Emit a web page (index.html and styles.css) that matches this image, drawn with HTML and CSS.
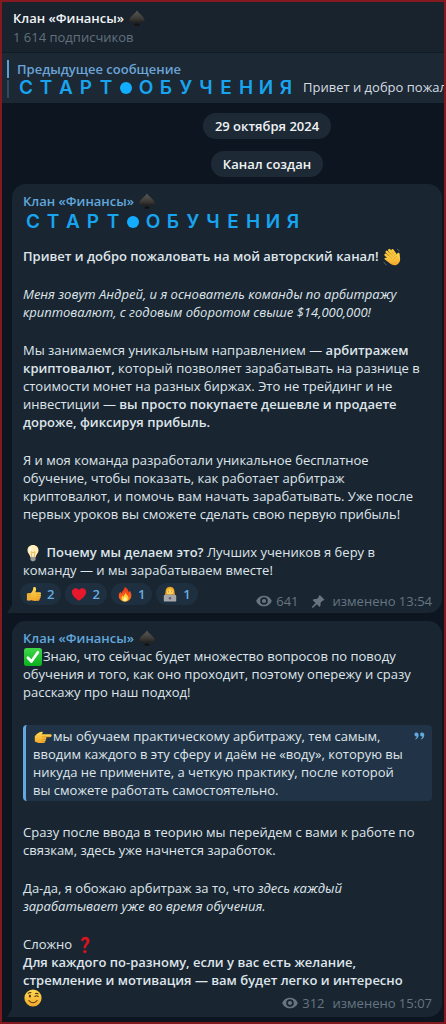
FILE: index.html
```html
<!DOCTYPE html>
<html lang="ru">
<head>
<meta charset="utf-8">
<meta name="viewport" content="width=device-width, initial-scale=1">
<title>Клан «Финансы»</title>
<link rel="stylesheet" href="styles.css">
</head>
<body>
<svg class="sprite" aria-hidden="true">
  <defs>
    <linearGradient id="g-spade" x1="0" y1="0" x2="0" y2="1"><stop offset="0" stop-color="#5c5a56"/><stop offset=".55" stop-color="#3a3835"/><stop offset="1" stop-color="#0c0b0a"/></linearGradient>
    <linearGradient id="g-skin" x1="0" y1="0" x2="0" y2="1"><stop offset="0" stop-color="#ffdc50"/><stop offset="1" stop-color="#f2a62c"/></linearGradient>
    <linearGradient id="g-check" x1="0" y1="0" x2="0" y2="1"><stop offset="0" stop-color="#3fd84c"/><stop offset="1" stop-color="#0bb01d"/></linearGradient>
    <linearGradient id="g-fire" x1="0" y1="0" x2="0" y2="1"><stop offset="0" stop-color="#e8311c"/><stop offset="1" stop-color="#fb7a1c"/></linearGradient>
    <symbol id="spade" viewBox="0 0 18 18"><path fill="url(#g-spade)" d="M9 .5C10.500 3.500 17.500 7.500 17.500 11.300c0 2.900-4.800 4-7.300 1.700.2 1.900.9 3 2 3.700v.8H5.800v-.8c1.100-.7 1.800-1.800 2-3.700-2.500 2.300-7.300 1.200-7.300-1.700C.5 7.500 7.500 3.500 9 .5z"/></symbol>
    <symbol id="wave" viewBox="0 0 18 18"><g stroke="#fcc83c" stroke-width="2.500" stroke-linecap="round"><path d="M2.600 6.800l6 5.200M3.800 3.900l6.500 6.300M6.300 2.100l5.700 6.800M9.600 2.400l4 5.900"/></g><path fill="url(#g-skin)" d="M4.200 9.200L12 6l1.500 2.200c.5-.8.3-2 .9-2.900.8-1 2.100-.4 2.200.8.300 3 1.300 5.900-.6 8.600-2 2.900-5.800 3.300-8.300 1.400L1.900 11.500c-1-.9.100-2.300 1.300-1.600z"/><path stroke="#d9912a" stroke-width=".6" fill="none" d="M4.800 6.700L9 10.400M6.400 4.500l4.300 4.600M8.800 3.600l3.600 4.500M13.500 8.200c-.6 1.600-1.600 2-2.400 3"/><path stroke="#65717c" stroke-width=".8" fill="none" d="M1 14.200c.5 1.400 1.400 2.200 2.700 2.600M14 1.200c1.200.3 2 1 2.500 2"/></symbol>
    <symbol id="bulb" viewBox="0 0 18 18"><path fill="#ffeeb5" d="M9 1c3.400 0 5.500 2.400 5.500 5.400 0 2.800-2.300 3.900-2.800 6.600H6.300C5.800 10.300 3.500 9.200 3.500 6.400 3.500 3.400 5.600 1 9 1z"/><path fill="#fffbe5" d="M7.500 2.400c-1.700.6-2.600 2-2.500 4 .1 1.600 1.700 2.800 2.200 4.300z"/><path fill="none" stroke="#e0a951" stroke-width=".8" d="M7.800 13L7 7.700l2 1 2-1-.8 5.300"/><path fill="#9c9b98" d="M6.400 13h5.200v2.200c0 1-.8 1.500-1.500 1.700L9 17.600l-1.100-.7c-.7-.2-1.500-.7-1.500-1.700z"/></symbol>
    <symbol id="thumb" viewBox="0 0 18 18"><path fill="url(#g-skin)" d="M5 8.200C7 6.700 8 4.600 8.100 2.300 8.200.7 10.900.7 11.300 2.800c.3 1.500-.2 2.900-.7 4.100h4.900c1.700 0 1.900 2 .6 2.600 1.400.6 1.100 2.400-.2 2.700.9.800.4 2.200-.7 2.400.4 1-.3 2-1.700 2.100-3.200.2-5.600.1-8.500-.9z"/><path fill="#eeb036" d="M1 8.500c1.600-1 3.500-.8 4.700-.2v7.800c-1.500.7-3.200.7-4.700 0z"/><path stroke="#d9912a" stroke-width=".6" fill="none" d="M12 9.500h4M11.900 12.200h4M11.800 14.600h3.400"/></symbol>
    <symbol id="heart" viewBox="0 0 18 18"><path fill="#e8182c" d="M9 16.700C5.500 14.500 1 10.900 1 6.600 1 2.200 6.800.8 9 4.600 11.200.8 17 2.200 17 6.600c0 4.300-4.500 7.900-8 10.100z"/></symbol>
    <symbol id="fire" viewBox="0 0 18 18"><path fill="url(#g-fire)" d="M8.700.8c3.500 2 4.200 4.400 4.400 6.500.7-.5 1-1.300 1-2.200 1.800 2 2.300 4.400 2 6.400-.4 3.500-3.400 6-7.100 6s-6.700-2.400-7-6c-.2-2.400.9-4 1.900-5.400.2 1.100.6 1.900 1.400 2.400C5.400 5.200 8.700 4 8.700.8z"/><path fill="#ffd33d" d="M9.500 7.400c.2 2.200 3.200 3.300 3.400 6 .1 2.500-1.700 4-3.900 4s-4-1.500-3.900-3.700c0-1.400.9-2.300 1.500-3.100.2.700.5 1.200 1 1.500.1-1.900 1.700-2.500 1.900-4.700z"/><path fill="#fff3a6" d="M9.200 12.300c1.500 1.600 2 2.400 1.700 3.500-.4 1.700-3.200 1.700-3.700 0-.3-1.300 1.100-2.100 2-3.500z"/></symbol>
    <symbol id="coder" viewBox="0 0 18 18"><path fill="#e39b20" d="M4 6c-.3-7 10.300-7 10 0l.8 5H3.200z"/><circle cx="9" cy="6.300" r="3.900" fill="#ffd35a"/><path fill="#f3b52d" d="M5 5.500C5.400 1 12.600 1 13 5.500c-2-.3-3.300-1.100-4.300-2.100C8 4.500 6.500 5.300 5 5.500z"/><path fill="#6b5945" d="M6.900 6.100h1v1h-1zm3.200 0h1v1h-1z"/><path fill="#68768d" d="M2.500 11c2-1 4-1.300 6.500-1.300s4.500.3 6.500 1.300v4h-13z"/><rect x="2" y="10.200" width="14" height="7.300" rx="1" fill="#a5a7ad"/><circle cx="9" cy="13.700" r="1.500" fill="#62666f"/></symbol>
    <symbol id="check" viewBox="0 0 18 18"><rect width="18" height="18" rx="2.500" fill="url(#g-check)"/><path fill="none" stroke="#fff" stroke-width="2.700" stroke-linecap="round" stroke-linejoin="round" d="M3.900 9.800l3.500 3.700 6.500-9.200"/></symbol>
    <symbol id="point" viewBox="0 0 18 18"><path fill="url(#g-skin)" d="M.8 8.200c2-2.300 4.200-4 6.500-4.400 1.200-.2 2 .9 1 1.700l-.9.800h9c1.700 0 1.700 2.600 0 2.600h-4.800c1.200.6 1 2.200-.2 2.400.8.800.4 2-.6 2.100.4 1-.4 1.700-1.500 1.700H6.200c-2.500 0-4-.6-5.400-1.500z"/><path stroke="#d68b25" stroke-width=".7" fill="none" d="M16 8.900H8M11.200 11.300H8M10.700 13.400H8"/></symbol>
    <symbol id="question" viewBox="0 0 18 18"><path fill="#d8141f" d="M5 4.600C5.500 2 7.200.7 9.300.7c2.700 0 4.300 1.700 4.300 4 0 3.500-3.500 4.200-3.500 7.600H7.700c0-4.300 2.800-4.500 2.800-7.200 0-2.500-3.100-2.100-3.400.4z"/><circle cx="8.900" cy="15.600" r="1.700" fill="#d8141f"/></symbol>
    <symbol id="wink" viewBox="0 0 18 18"><circle cx="9" cy="9" r="8.600" fill="url(#g-skin)"/><ellipse cx="5.900" cy="7" rx="1.100" ry="1.500" fill="#583719"/><path fill="none" stroke="#583719" stroke-width="1.100" stroke-linecap="round" d="M10.900 7.500c1-.9 2.300-.9 3.300 0M4.900 11.500c2 2.900 6.200 2.900 8.200 0M4.200 4.300c.8-.7 1.700-.9 2.700-.7M11.500 4.600c.9-.4 1.800-.3 2.600.2"/></symbol>
    <symbol id="eye" viewBox="0 0 16 12"><path fill="currentColor" fill-rule="evenodd" d="M8 .7C4.300.7 1.300 2.900.2 6c1.100 3.100 4.100 5.300 7.800 5.300s6.700-2.200 7.800-5.300C14.700 2.900 11.700.7 8 .7zm0 1.500a3.800 3.800 0 110 7.600 3.800 3.800 0 010-7.600zm0 1.700a2.100 2.100 0 100 4.200 2.100 2.100 0 000-4.200z"/></symbol>
    <symbol id="pin" viewBox="0 0 12 12"><path fill="currentColor" d="M7.700 0l4.300 4.300-1.200 1.100-.8-.1-1.800 2c.4 1.400.2 2.700-.7 3.700L5 8.500 1.200 12 .2 11l3.500-3.700L1 4.500c1-.9 2.300-1.100 3.700-.7l2-1.800-.1-.9z"/></symbol>
    <symbol id="quote" viewBox="0 0 12 8"><path fill="currentColor" d="M.5 2.300C.5 1 1.400.3 2.700.3c1.500 0 2.300 1 2.300 2.700C5 5.300 3.800 7 1.700 7.700L1.200 7c1-.5 1.600-1.300 1.700-2.500C1.400 4.600.5 3.600.5 2.300zM6.700 2.300C6.700 1 7.600.3 8.900.3c1.500 0 2.300 1 2.300 2.700 0 2.300-1.200 4-3.300 4.700L7.400 7c1-.5 1.600-1.300 1.700-2.500-1.500.1-2.400-.9-2.400-2.200z"/></symbol>
  </defs>
</svg>

<div class="app">
  <header class="topbar">
    <h1 class="title">Клан «Финансы» <svg class="emoji spade"><use href="#spade"/></svg></h1>
    <p class="subtitle">1 614 подписчиков</p>
  </header>

  <button class="pinned" type="button">
    <span class="pinned-marks"><i class="mark mark-on"></i><i class="mark"></i></span>
    <span class="pinned-body">
      <span class="pinned-title">Предыдущее сообщение</span>
      <span class="pinned-line">
        <span class="tiles"><b>С</b><b>Т</b><b>А</b><b>Р</b><b>Т</b><b class="dot"></b><b>О</b><b>Б</b><b>У</b><b>Ч</b><b>Е</b><b>Н</b><b>И</b><b>Я</b></span>
        <span class="pinned-text">Привет и добро пожаловать</span>
      </span>
    </span>
  </button>

  <main class="feed">
    <div class="service">29 октября 2024</div>
    <div class="service">Канал создан</div>

    <article class="bubble">
      <h2 class="author">Клан «Финансы» <svg class="emoji spade"><use href="#spade"/></svg></h2>
      <div class="tiles">
        <b>С</b><b>Т</b><b>А</b><b>Р</b><b>Т</b><b class="dot"></b><b>О</b><b>Б</b><b>У</b><b>Ч</b><b>Е</b><b>Н</b><b>И</b><b>Я</b>
      </div>
      <p class="lead"><strong>Привет и добро пожаловать на мой авторский канал!</strong> <svg class="emoji"><use href="#wave"/></svg></p>
      <p><em>Меня зовут Андрей, и я основатель команды по арбитражу криптовалют, с годовым оборотом свыше $14,000,000!</em></p>
      <p>Мы занимаемся уникальным направлением — <strong>арбитражем криптовалют,</strong> который позволяет зарабатывать на разнице в стоимости монет на разных биржах. Это не трейдинг и не инвестиции — <strong>вы просто покупаете дешевле и продаете дороже, фиксируя прибыль.</strong></p>
      <p>Я и моя команда разработали уникальное бесплатное обучение, чтобы показать, как работает арбитраж криптовалют, и помочь вам начать зарабатывать. Уже после первых уроков вы сможете сделать свою первую прибыль!</p>
      <p><svg class="emoji"><use href="#bulb"/></svg> <strong>Почему мы делаем это?</strong> Лучших учеников я беру в команду — и мы зарабатываем вместе!</p>
      <footer class="footer">
        <div class="reactions">
          <button class="reaction" type="button"><svg class="react-icon"><use href="#thumb"/></svg>2</button>
          <button class="reaction" type="button"><svg class="react-icon"><use href="#heart"/></svg>2</button>
          <button class="reaction" type="button"><svg class="react-icon"><use href="#fire"/></svg>1</button>
          <button class="reaction" type="button"><svg class="react-icon"><use href="#coder"/></svg>1</button>
        </div>
        <div class="meta"><svg class="eye"><use href="#eye"/></svg><span>641</span><svg class="pin"><use href="#pin"/></svg><time>изменено 13:54</time></div>
      </footer>
    </article>

    <article class="bubble">
      <h2 class="author">Клан «Финансы» <svg class="emoji spade"><use href="#spade"/></svg></h2>
      <p><svg class="emoji"><use href="#check"/></svg>Знаю, что сейчас будет множество вопросов по поводу обучения и того, как оно проходит, поэтому опережу и сразу расскажу про наш подход!</p>
      <blockquote class="quote"><svg class="quote-icon"><use href="#quote"/></svg><svg class="emoji"><use href="#point"/></svg>мы обучаем практическому арбитражу, тем самым, вводим каждого в эту сферу и даём не «воду», которую вы никуда не примените, а четкую практику, после которой вы сможете работать самостоятельно.</blockquote>
      <p>Сразу после ввода в теорию мы перейдем с вами к работе по связкам, здесь уже начнется заработок.</p>
      <p>Да-да, я обожаю арбитраж за то, что <em>здесь каждый зарабатывает уже во время обучения.</em></p>
      <p>Сложно <svg class="emoji"><use href="#question"/></svg><br><strong>Для каждого по-разному, если у вас есть желание, стремление и мотивация — вам будет легко и интересно</strong></p>
      <footer class="footer footer-inline">
        <svg class="emoji"><use href="#wink"/></svg>
        <div class="meta"><svg class="eye"><use href="#eye"/></svg><span>312</span><time>изменено 15:07</time></div>
      </footer>
    </article>
  </main>
</div>
</body>
</html>
```
FILE: styles.css
```css
* { box-sizing: border-box; }

body {
  margin: 0;
  background: #0d1620;
  color: #dfe5ea;
  font: 400 13px/18px "Open Sans", "Noto Sans", sans-serif;
}

h1, h2, p, blockquote { margin: 0; font-size: inherit; }
button { border: 0; font: inherit; text-align: left; cursor: pointer; }
strong, h1, h2 { font-weight: 600; }

.sprite { position: absolute; width: 0; height: 0; }

.app {
  min-height: 100vh;
  border: 2px solid #84191f;
}

.emoji {
  width: 18px;
  height: 18px;
  margin: -2px 1px;
  vertical-align: -3px;
}
.spade { height: 16px; vertical-align: -1px; }

.topbar {
  padding: 7px 11px 6px;
  background: #19232d;
  border-bottom: 1px solid #111b24;
}
.title { color: #f0f3f5; }
.subtitle { margin-top: 1px; color: #62707d; }

.pinned {
  display: flex;
  gap: 7px;
  width: 100%;
  padding: 7px 0 5px 5px;
  background: #1c2833;
  color: #d5dce2;
}
.pinned-marks { display: flex; flex-direction: column; gap: 2px; flex: none; width: 2px; }
.mark { flex: 1; background: #2f4a61; }
.mark-on { background: #5c9fd5; }
.pinned-body { flex: 1; min-width: 0; }
.pinned-title { display: block; padding-left: 1px; color: #6ba4d8; font-weight: 600; }
.pinned-line { display: flex; white-space: nowrap; }
.pinned-text { flex: 1; min-width: 0; margin-left: 7px; overflow: hidden; }

.tiles {
  display: flex;
  flex: none;
  height: 20px;
  color: #18a4ee;
  font: 600 19px/20px Inter, "Open Sans", sans-serif;
}
.tiles b { display: grid; place-items: center; width: 20px; font-weight: 600; }
.bubble .tiles { margin-top: 2px; }
.dot::before { content: ""; width: 12px; height: 12px; border-radius: 50%; background: #12adff; }

.feed {
  display: flex;
  flex-direction: column;
  align-items: center;
  padding: 10px 2px 5px 10px;
}
.service {
  margin: 0 0 12px 80px;
  padding: 4px 12px;
  border-radius: 13px;
  background: #1d2a36;
  color: #f0f3f5;
  font-weight: 600;
}
.service + .bubble { margin-top: -5px; }

.bubble {
  position: relative;
  width: 100%;
  padding: 8px 10px 3px 11px;
  border-radius: 14px 14px 14px 0;
  background: #192632;
}
.bubble + .bubble { margin-top: 8px; }
.bubble::before {
  content: "";
  position: absolute;
  left: -5px;
  bottom: 0;
  width: 5px;
  height: 8px;
  background: #192632;
  clip-path: polygon(100% 0, 100% 100%, 0 100%);
}
.bubble p { padding-right: 8px; }
.bubble p + p { margin-top: 20px; }
.bubble .lead { margin-top: 15px; }
.author { color: #62a7dc; }

.footer {
  display: flex;
  align-items: flex-end;
  justify-content: space-between;
  padding-top: 4px;
}
.footer-inline { align-items: flex-start; padding: 2px 0; }
.footer-inline .meta { padding-top: 3px; }
.reactions { display: flex; gap: 4px; margin-left: -3px; padding-bottom: 5px; }
.reaction {
  display: flex;
  align-items: center;
  gap: 5px;
  height: 22px;
  padding: 0 7px 0 6px;
  border-radius: 11px;
  background: #1e303f;
  color: #67abe3;
  font-weight: 600;
}
.react-icon { width: 16px; height: 16px; }
.meta { display: flex; align-items: center; color: #667581; }
.eye { width: 16px; height: 12px; margin-right: 4px; }
.pin { width: 14px; height: 13px; margin-left: 12px; }
.meta time { margin-left: 8px; }

.quote {
  position: relative;
  margin: 24px 0 22px;
  padding: 2px 22px 2px 7px;
  border-left: 3px solid #62a9df;
  border-radius: 4px;
  background: #213447;
}
.quote-icon {
  position: absolute;
  top: 7px;
  right: 7px;
  width: 11px;
  height: 8px;
  color: #62a9df;
}
```
